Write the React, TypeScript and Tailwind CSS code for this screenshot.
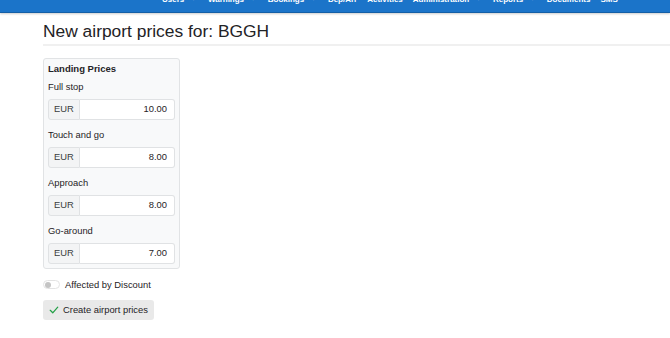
import React from "react";

const navItems: { label: string; dot: boolean }[] = [
  { label: "Users", dot: true },
  { label: "Warnings", dot: true },
  { label: "Bookings", dot: true },
  { label: "Dep/Arr", dot: false },
  { label: "Activities", dot: false },
  { label: "Administration", dot: true },
  { label: "Reports", dot: true },
  { label: "Documents", dot: false },
  { label: "SMS", dot: false },
];

const fields = [
  { label: "Full stop", value: "10.00" },
  { label: "Touch and go", value: "8.00" },
  { label: "Approach", value: "8.00" },
  { label: "Go-around", value: "7.00" },
];

export default function App() {
  return (
    <div
      className="w-[670px] h-[338px] bg-white text-[#1f2326] overflow-hidden"
      style={{ fontFamily: '"Liberation Sans", Arial, sans-serif' }}
    >
      <div className="h-[13px] bg-[#1b74c9] border-b border-[#155fa6] shadow-[0_1px_2px_rgba(0,0,0,0.2)] overflow-hidden">
        <div className="flex pl-[162px] gap-[10px] mt-[-6px] text-[8px] leading-[12px] font-bold text-white whitespace-nowrap">
          {navItems.map((n) => (
            <span key={n.label} className="flex">
              <span>{n.label}</span>
              {n.dot && <span className="ml-[8px] mr-[3px] text-white/70">·</span>}
            </span>
          ))}
        </div>
      </div>

      <div className="pl-[43px]">
        <h1 className="text-[17.4px] leading-[20px] mt-[8px] font-normal text-[#1f2326]">
          New airport prices for: BGGH
        </h1>
        <div className="h-[2px] bg-[#f0f0f0] mt-[3px]" />

        <div className="mt-[12px] w-[137px] bg-[#f8f9fa] border border-[#e1e3e5] rounded-[3px] px-[4px] pt-[3px] pb-[4px]">
          <div className="text-[9.5px] leading-[14px] font-bold">Landing Prices</div>
          {fields.map((f, i) => (
            <div key={f.label} className={i === 0 ? "mt-[4px]" : "mt-[8px]"}>
              <div className="text-[9.4px] leading-[14px]">{f.label}</div>
              <div className="mt-[5px] flex h-[21px] text-[9.4px]">
                <div className="w-[32px] flex items-center justify-center bg-[#f3f4f5] border border-[#e0e2e4] rounded-l-[3px] text-[#3a3d40]">
                  EUR
                </div>
                <div className="flex-1 flex items-center justify-end pr-[7px] bg-white border border-l-0 border-[#e0e2e4] rounded-r-[3px]">
                  {f.value}
                </div>
              </div>
            </div>
          ))}
        </div>

        <div className="mt-[10px] flex items-center gap-[5px] h-[11px]">
          <div className="w-[17px] h-[9px] rounded-full border border-[#e3e3e3] bg-white flex items-center pl-[1px]">
            <div className="w-[6px] h-[6px] rounded-full bg-[#c4c4c4]" />
          </div>
          <span className="text-[9.4px] leading-[11px]">Affected by Discount</span>
        </div>

        <button className="mt-[10px] w-[111px] h-[20px] bg-[#e9e9e9] rounded-[3px] flex items-center pl-[6px] gap-[4px] text-[9.4px]">
          <svg width="10" height="10" viewBox="0 0 16 16" fill="none">
            <path d="M2 8.5 L6 12.5 L14 3.5" stroke="#22a046" strokeWidth="2" strokeLinecap="round" strokeLinejoin="round" />
          </svg>
          <span>Create airport prices</span>
        </button>
      </div>
    </div>
  );
}
